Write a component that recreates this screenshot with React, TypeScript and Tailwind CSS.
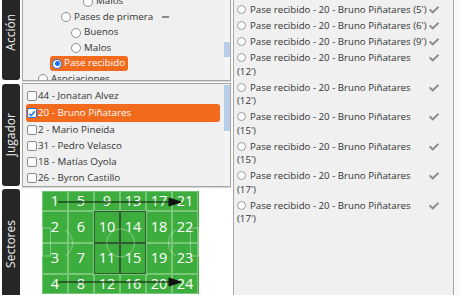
import React from "react";
import { FaCheck } from "react-icons/fa";

const Radio = ({ on }: { on?: boolean }) =>
  on ? (
    <span className="inline-flex w-[10px] h-[10px] rounded-full border border-[#1a73e8] bg-white items-center justify-center shrink-0">
      <span className="w-[5px] h-[5px] rounded-full bg-[#1a73e8]" />
    </span>
  ) : (
    <span className="inline-block w-[10px] h-[10px] rounded-full border border-[#8e8e8e] bg-white shrink-0" />
  );

const Box = ({ on }: { on?: boolean }) =>
  on ? (
    <span className="flex w-[10px] h-[10px] rounded-[2px] bg-white border border-[#1a73e8] items-center justify-center shrink-0">
      <svg viewBox="0 0 10 10" className="w-[9px] h-[9px]">
        <path d="M1.5 5.2 L4 7.6 L8.6 2.2" fill="none" stroke="#1a73e8" strokeWidth="1.8" />
      </svg>
    </span>
  ) : (
    <span className="block w-[10px] h-[10px] rounded-[2px] bg-white border border-[#8a8a8a] shrink-0" />
  );

const SideLabel = ({ text, className }: { text: string; className: string }) => (
  <div className={`w-[18px] shrink-0 bg-[#262626] rounded-[3px] flex items-center justify-center ${className}`}>
    <span className="[writing-mode:vertical-rl] rotate-180 whitespace-nowrap text-[#eeeeee] text-[12px] leading-none">
      {text}
    </span>
  </div>
);

const acciones = [
  { label: "Malos", pl: "pl-[60px]" },
  { label: "Pases de primera", pl: "pl-[38px]", dash: true },
  { label: "Buenos", pl: "pl-[48px]" },
  { label: "Malos", pl: "pl-[48px]" },
  { label: "Pase recibido", pl: "pl-[27px]", on: true },
  { label: "Asociaciones", pl: "pl-[15px]" },
];

const jugadores = [
  "44 - Jonatan Alvez",
  "20 - Bruno Piñatares",
  "2 - Mario Pineida",
  "31 - Pedro Velasco",
  "18 - Matías Oyola",
  "26 - Byron Castillo",
];

const eventos = ["5'", "6'", "9'", "12'", "12'", "15'", "15'", "17'", "17'"];

const rows = ["h-[20px]", "h-[32px]", "h-[31px]", "h-[20px]"];
const strong = [10, 14, 11, 15];

function Field() {
  return (
    <div className="relative w-[157px] ml-[22px] mt-[2px]">
      <div className="grid grid-cols-[repeat(6,26px)] bg-[#3dae3d]">
        {[0, 1, 2, 3].map((r) =>
          [0, 1, 2, 3, 4, 5].map((c) => {
            const n = c * 4 + r + 1;
            const dark = strong.includes(n);
            return (
              <div
                key={n}
                className={`${rows[r]} flex items-center justify-center text-white text-[14.5px] leading-none ${
                  dark ? "border-[1.5px] border-[#2f5a2f]" : "border border-[#79c879]"
                }`}
              >
                {n}
              </div>
            );
          })
        )}
      </div>
      <svg viewBox="0 0 157 103" className="absolute inset-0 w-[157px] h-[103px] pointer-events-none">
        <g fill="none" stroke="#ffffff" strokeOpacity="0.45" strokeWidth="0.8">
          <rect x="0.5" y="37" width="8" height="28" />
          <path d="M23 39 A 15 15 0 0 1 23 65" />
          <circle cx="78.5" cy="52" r="14" />
          <rect x="148.5" y="37" width="8" height="28" />
          <path d="M134 39 A 15 15 0 0 0 134 65" />
        </g>
        <g stroke="#111111" strokeWidth="1" fill="#111111">
          <line x1="16" y1="11" x2="130" y2="11" />
          <path d="M127 7 L139 11 L127 15 Z" />
          <line x1="16" y1="91" x2="130" y2="91" />
          <path d="M127 87 L139 91 L127 95 Z" />
        </g>
      </svg>
    </div>
  );
}

export default function App() {
  return (
    <div className="w-[460px] h-[295px] overflow-hidden bg-white flex font-['Open_Sans',sans-serif] text-[#333333]">
      <div className="w-[231px] shrink-0 flex flex-col">
        <div className="flex h-[96px] -mt-[15px] pl-[2px] gap-[2px]">
          <SideLabel text="Acción" className="h-[95px]" />
          <div className="flex-1 flex border border-[#a6a6a6] bg-[#f0f0f0] overflow-hidden shadow-[0_1px_1px_rgba(0,0,0,0.15)]">
            <div className="flex-1 pt-[8px] text-[9.8px]">
              {acciones.map((a, i) => (
                <div key={i} className={`h-[15.5px] flex items-center ${a.pl}`}>
                  {a.on ? (
                    <div className="flex items-center gap-[2px] bg-[#f26a1c] rounded-[3px] h-[15px] pl-[2px] pr-[3px] text-white">
                      <Radio on />
                      <span>{a.label}</span>
                    </div>
                  ) : (
                    <div className="flex items-center gap-[3px]">
                      <Radio />
                      <span>{a.label}</span>
                      {a.dash && <span className="ml-[6px] w-[7px] h-[2px] bg-[#8a8a8a]" />}
                    </div>
                  )}
                </div>
              ))}
            </div>
            <div className="w-[6px] bg-[#f4f4f4] pt-[56px]">
              <div className="h-[15px] bg-[#b9cde6]" />
            </div>
          </div>
        </div>

        <div className="flex h-[106px] mt-[2px] pl-[2px] gap-[2px]">
          <SideLabel text="Jugador" className="my-[1px]" />
          <div className="flex-1 flex border border-[#a6a6a6] bg-[#f0f0f0] overflow-hidden shadow-[0_1px_1px_rgba(0,0,0,0.15)]">
            <div className="flex-1 pt-[4px] pl-[3px] pr-[4px] text-[9.8px]">
              {jugadores.map((j, i) =>
                i === 1 ? (
                  <div key={i} className="h-[18px] flex items-center gap-[1px] pl-[1px] bg-[#f26a1c] rounded-[3px] text-white">
                    <Box on />
                    <span>{j}</span>
                  </div>
                ) : (
                  <div key={i} className="h-[16px] flex items-center gap-[1px] pl-[1px]">
                    <Box />
                    <span>{j}</span>
                  </div>
                )
              )}
            </div>
            <div className="w-[6px] bg-[#f4f4f4] pt-[1px]">
              <div className="h-[46px] bg-[#b9cde6]" />
            </div>
          </div>
        </div>

        <div className="flex mt-[2px] pl-[2px] h-[110px]">
          <SideLabel text="Sectores" className="h-[110px]" />
          <Field />
        </div>
      </div>

      <div className="w-[221px] ml-[2px] h-[300px] border-x border-[#a6a6a6] bg-[#f0f0f0] pt-[2px] text-[9.7px]">
        {eventos.map((m, i) => (
          <div key={i} className="flex py-[1.25px] pl-[3px]">
            <div className="w-[192px] leading-[13.5px]">
              <span className="inline-block w-[9px] h-[9px] rounded-full border border-[#9a9a9a] bg-white align-[-1px] mr-[4px]" />
              Pase recibido - 20 - Bruno Piñatares ({m})
            </div>
            <FaCheck className="mt-[2px] w-[10px] h-[10px] text-[#8c8c8c]" />
          </div>
        ))}
      </div>
      <div className="flex-1 bg-[#f7f9fc]" />
    </div>
  );
}
